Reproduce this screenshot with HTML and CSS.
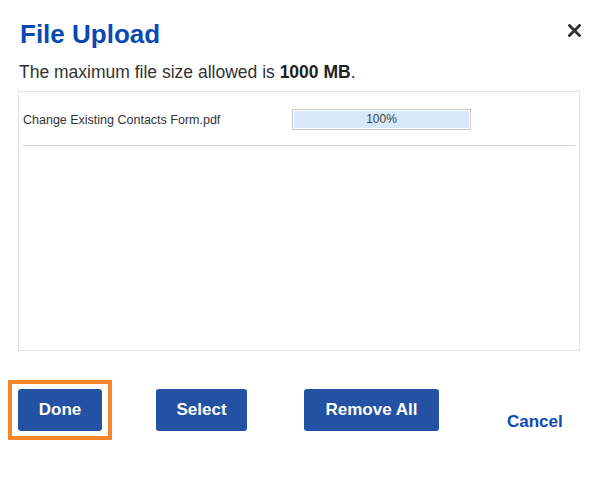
FILE: index.html
```html
<!DOCTYPE html>
<html>
<head>
<meta charset="utf-8">
<link rel="stylesheet" href="styles.css">
</head>
<body>
<div class="dialog">
  <div class="header">
    <h1 class="title">File Upload</h1>
    <button class="close" aria-label="Close">
      <svg width="13" height="13" viewBox="0 0 13 13"><path d="M1.5 1.5 L11.5 11.5 M11.5 1.5 L1.5 11.5" stroke="#333" stroke-width="2.8" stroke-linecap="square"/></svg>
    </button>
  </div>
  <p class="note">The maximum file size allowed is <b>1000 MB</b>.</p>
  <div class="filebox">
    <div class="filerow">
      <span class="fname">Change Existing Contacts Form.pdf</span>
      <div class="progress"><div class="fill">100%</div></div>
    </div>
  </div>
  <div class="actions">
    <button class="btn btn-done">Done</button>
    <button class="btn btn-select">Select</button>
    <button class="btn btn-remove">Remove All</button>
    <a class="cancel" href="#">Cancel</a>
  </div>
</div>
</body>
</html>
```

FILE: styles.css
```css
* { box-sizing: border-box; }
html, body { margin: 0; padding: 0; background: #fff; }
body { font-family: "Liberation Sans", Arial, sans-serif; color: #333; }
.dialog { width: 602px; height: 479px; padding: 19px 21px 0 18px; }
.header { display: flex; justify-content: space-between; align-items: flex-start; }
.title { margin: 0 0 0 2px; font-size: 26px; line-height: 30px; font-weight: bold; color: #0a48b3; }
.close { border: 0; background: none; padding: 0; margin-top: 5px; width: 13px; height: 13px; display: block; }
.close svg { display: block; }
.note { margin: 13px 0 0 1px; font-size: 17.5px; line-height: 20px; color: #333; }
.note b { color: #222; }
.filebox { margin-top: 9px; width: 562px; height: 260px; border: 1px solid #e3e3e3; padding: 0 4px; }
.filerow { display: flex; align-items: center; padding: 17px 0 15px; border-bottom: 1px solid #cfcfcf; }
.fname { width: 269px; font-size: 12.5px; color: #333; }
.progress { width: 179px; height: 21px; border: 1px solid #c9c9c9; padding: 1px; background: #fff; }
.fill { height: 100%; background: #d6e8f9; font-size: 12px; line-height: 16px; text-align: center; color: #444; }
.actions { display: flex; align-items: flex-start; margin-top: 38px; }
.btn { position: relative; height: 42px; padding: 0 20px; border: 0; border-radius: 3px; background: #2352a4; color: #fff; font-family: "Liberation Sans", Arial, sans-serif; font-size: 17px; font-weight: bold; }
.btn-done { width: 84px; padding: 0; }
.btn-done::after { content: ""; position: absolute; left: -10px; top: -9px; right: -10px; bottom: -9px; border: 4px solid #f7862a; }
.btn-select { margin-left: 54px; width: 91px; padding: 0; }
.btn-remove { margin-left: 57px; width: 135px; padding: 0; }
.cancel { margin-left: 68px; margin-top: 23px; font-size: 17px; font-weight: bold; color: #0a4ab5; text-decoration: none; line-height: 20px; }
```
